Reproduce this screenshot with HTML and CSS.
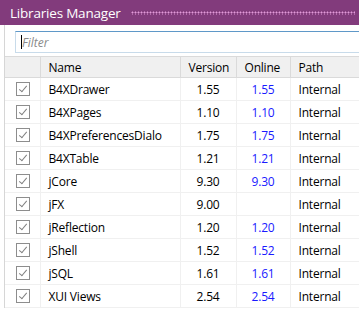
FILE: index.html
```html
<!DOCTYPE html>
<html lang="en">
<head>
    <meta charset="UTF-8">
    <title>Libraries Manager</title>
    <link rel="stylesheet" href="styles.css">
</head>
<body>
    <div class="panel">
        <div class="titlebar">
            <span class="title">Libraries Manager</span>
            <span class="grip"></span>
        </div>
        <div class="panel-body">
            <div class="filter">
                <span class="caret"></span><span class="placeholder">Filter</span>
            </div>
            <table class="libs">
                <colgroup>
                    <col class="c-check">
                    <col class="c-name">
                    <col class="c-version">
                    <col class="c-online">
                    <col class="c-path">
                </colgroup>
                <thead>
                    <tr>
                        <th></th>
                        <th>Name</th>
                        <th>Version</th>
                        <th>Online</th>
                        <th>Path</th>
                    </tr>
                </thead>
                <tbody>
                    <tr><td><span class="check"></span></td><td>B4XDrawer</td><td class="num">1.55</td><td class="num online">1.55</td><td>Internal</td></tr>
                    <tr><td><span class="check"></span></td><td>B4XPages</td><td class="num">1.10</td><td class="num online">1.10</td><td>Internal</td></tr>
                    <tr><td><span class="check"></span></td><td>B4XPreferencesDialo</td><td class="num">1.75</td><td class="num online">1.75</td><td>Internal</td></tr>
                    <tr><td><span class="check"></span></td><td>B4XTable</td><td class="num">1.21</td><td class="num online">1.21</td><td>Internal</td></tr>
                    <tr><td><span class="check"></span></td><td>jCore</td><td class="num">9.30</td><td class="num online">9.30</td><td>Internal</td></tr>
                    <tr><td><span class="check"></span></td><td>jFX</td><td class="num">9.00</td><td class="num online"></td><td>Internal</td></tr>
                    <tr><td><span class="check"></span></td><td>jReflection</td><td class="num">1.20</td><td class="num online">1.20</td><td>Internal</td></tr>
                    <tr><td><span class="check"></span></td><td>jShell</td><td class="num">1.52</td><td class="num online">1.52</td><td>Internal</td></tr>
                    <tr><td><span class="check"></span></td><td>jSQL</td><td class="num">1.61</td><td class="num online">1.61</td><td>Internal</td></tr>
                    <tr><td><span class="check"></span></td><td>XUI Views</td><td class="num">2.54</td><td class="num online">2.54</td><td>Internal</td></tr>
                </tbody>
            </table>
        </div>
    </div>
</body>
</html>
```

FILE: styles.css
```css
body {
    margin: 0;
    background: #ffffff;
    font-family: 'Open Sans', 'Noto Sans', sans-serif;
    font-size: 12px;
    color: #000000;
    overflow: hidden;
}

.panel {
    width: 359px;
    height: 309px;
    overflow: hidden;
}

.titlebar {
    height: 25px;
    background: #823b7c;
    display: flex;
    align-items: center;
    padding-left: 10px;
    gap: 10px;
}

.title {
    color: #ffffff;
    font-size: 13.5px;
    letter-spacing: -0.2px;
    white-space: nowrap;
}

.grip {
    flex: 1;
    height: 4px;
    margin-right: 4px;
    background-image: radial-gradient(circle, #e29ad9 0.9px, transparent 1.1px);
    background-size: 3px 3px;
}

.panel-body {
    border-left: 1px solid #d6d6d6;
    margin-left: 4px;
    padding-top: 6px;
}

.filter {
    margin-left: 10px;
    height: 20px;
    border: 1px solid #c8dbea;
    border-top-color: #5f98c8;
    border-right: none;
    display: flex;
    align-items: center;
    padding-left: 5px;
}

.caret {
    width: 1px;
    height: 14px;
    background: #000000;
}

.placeholder {
    font-style: italic;
    color: #8a8a8a;
}

.libs {
    margin-top: 3px;
    width: 355px;
    border-collapse: collapse;
    table-layout: fixed;
    letter-spacing: -0.2px;
}

.c-check { width: 35px; }
.c-name { width: 140px; }
.c-version { width: 56px; }
.c-online { width: 54px; }

.libs th {
    height: 20px;
    background: #f0f0f0;
    font-weight: normal;
    text-align: left;
    padding: 0 0 0 8px;
    border-top: 1px solid #dadada;
    border-right: 1px solid #dadada;
    border-bottom: 1px solid #dadada;
    white-space: nowrap;
}

.libs td {
    height: 22px;
    padding: 0 0 0 8px;
    border-right: 1px solid #f0f0f0;
    border-bottom: 1px solid #f0f0f0;
    white-space: nowrap;
    overflow: hidden;
}

.libs td.num {
    text-align: center;
    padding: 0;
}

.libs td.online {
    color: #1a1aff;
}

.check {
    display: block;
    width: 12px;
    height: 12px;
    border: 1px solid #8d8d8d;
    margin-left: 3px;
    position: relative;
}

.check::after {
    content: "";
    position: absolute;
    left: 4px;
    top: 1px;
    width: 3px;
    height: 7px;
    border-right: 1.5px solid #808080;
    border-bottom: 1.5px solid #808080;
    transform: rotate(40deg);
}
```
